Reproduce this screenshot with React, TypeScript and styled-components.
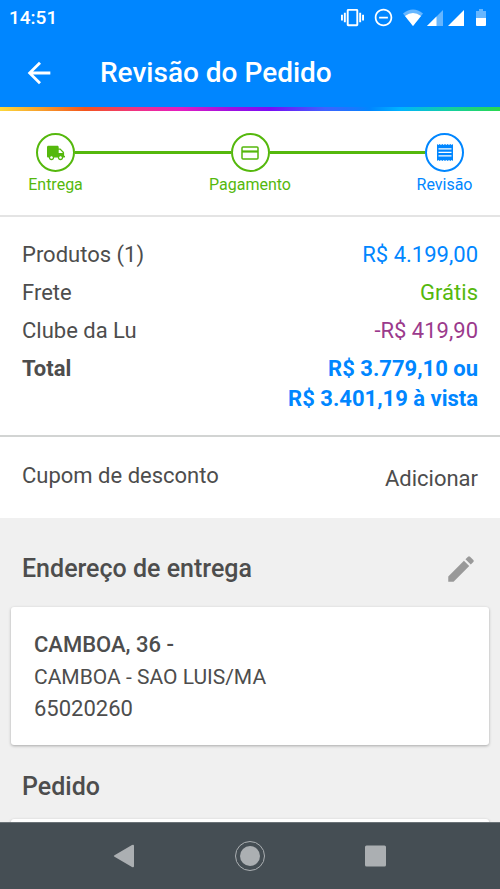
import React from 'react';
import styled, { createGlobalStyle } from 'styled-components';
import { MdArrowBack, MdEdit, MdVibration, MdRemoveCircleOutline } from 'react-icons/md';
import { FaTruck } from 'react-icons/fa';

const color = {
  blue: '#0086ff',
  green: '#55b80d',
  purple: '#9b3a8c',
  text: '#4d4d4d',
  page: '#f0f0f0',
  nav: '#454e54',
};

const GlobalStyle = createGlobalStyle`
  * { box-sizing: border-box; }
  body {
    margin: 0;
    background: ${color.page};
    color: ${color.text};
    font-family: Roboto, "Liberation Sans", sans-serif;
    font-size: 22px;
    line-height: 30px;
  }
  h1, h2, p, dl, dd, ol { margin: 0; padding: 0; }
  button {
    padding: 0;
    border: 0;
    background: none;
    color: inherit;
    font: inherit;
    cursor: pointer;
  }
  svg { display: block; }
`;

const Screen = styled.div`
  display: flex;
  flex-direction: column;
  height: 100vh;
  overflow: hidden;
`;

const StatusBar = styled.div`
  display: flex;
  flex: none;
  align-items: center;
  justify-content: space-between;
  height: 35px;
  padding: 0 13px 0 9px;
  background: ${color.blue};
  color: #fff;
  font-size: 19px;
  font-weight: 500;
`;

const StatusIcons = styled.div`
  display: flex;
  align-items: center;
`;

const Toolbar = styled.header`
  display: flex;
  flex: none;
  align-items: center;
  gap: 44px;
  height: 72px;
  padding: 3px 22px 0;
  background: ${color.blue};
  color: #fff;
`;

const Title = styled.h1`
  font-size: 28px;
  font-weight: 500;
  line-height: 36px;
`;

const Rainbow = styled.div`
  flex: none;
  height: 4px;
  background: linear-gradient(
    90deg,
    #fcd83b 0%, #f7a02c 8%, #f4551c 17%, #f0308a 28%, #e51cc0 36%,
    #a010e0 46%, #7a0cf5 54%, #3f62ff 65%, #0086ff 74%, #00b4ff 80%, #14cfa0 90%, #2ad94e 100%
  );
`;

const Content = styled.main`
  flex: 1;
  min-height: 0;
  overflow: hidden;
`;

const Steps = styled.ol`
  display: flex;
  height: 106px;
  padding: 22px 36px 0;
  border-bottom: 2px solid #e4e4e4;
  background: #fff;
  list-style: none;
`;

const Step = styled.li<{ $color: string }>`
  display: flex;
  flex: none;
  flex-direction: column;
  align-items: center;
  gap: 3px;
  width: 39px;
  color: ${(p) => p.$color};
  font-size: 16px;
  line-height: 20px;
  white-space: nowrap;
`;

const StepCircle = styled.span`
  display: flex;
  align-items: center;
  justify-content: center;
  width: 39px;
  height: 39px;
  border: 2px solid currentColor;
  border-radius: 50%;
`;

const Connector = styled.li`
  flex: 1;
  height: 3px;
  margin-top: 18px;
  background: ${color.green};
`;

const Summary = styled.dl`
  display: flex;
  flex-direction: column;
  gap: 8px;
  padding: 23px 22px 21px;
  border-bottom: 2px solid #d2d4d3;
  background: #fff;
`;

const SummaryRow = styled.div<{ $color: string; $bold?: boolean }>`
  display: flex;
  justify-content: space-between;
  font-weight: ${(p) => (p.$bold ? 700 : 400)};

  dd {
    color: ${(p) => p.$color};
    text-align: right;
  }
`;

const Coupon = styled.section`
  display: flex;
  align-items: flex-start;
  justify-content: space-between;
  height: 81px;
  padding: 24px 22px 0;
  background: #fff;
`;

const AddButton = styled.button`
  && { padding-top: 3px; }
`;

const SectionHead = styled.div`
  display: flex;
  align-items: center;
  justify-content: space-between;
  padding: 33px 22px 20px;
`;

const EditButton = styled.button`
  color: #999;
`;

const SectionTitle = styled.h2`
  font-size: 25px;
  font-weight: 500;
  line-height: 36px;
`;

const Card = styled.section`
  min-height: 138px;
  margin: 0 11px;
  padding: 22px 23px 20px;
  border-radius: 3px;
  background: #fff;
  box-shadow: 0 1px 3px rgba(0, 0, 0, 0.3);
  line-height: 32px;
`;

const Street = styled.p`
  font-weight: 500;
`;

const City = styled.p`
  font-size: 21px;
`;

const OrderHead = styled.div`
  padding: 24px 22px 14px;
`;

const NavBar = styled.nav`
  display: flex;
  flex: none;
  align-items: center;
  justify-content: space-between;
  height: 67px;
  padding: 0 108px;
  border-top: 1px solid #6b7378;
  background: ${color.nav};
`;

const DndIcon = styled(MdRemoveCircleOutline)`
  margin: 0 9px;
`;

function SignalIcons() {
  return (
    <svg width="84" height="20" viewBox="0 0 84 20" fill="#fff" aria-hidden="true">
      <path d="M0 5.500Q10 -2.500 20 5.500L10 18Z" opacity=".4" />
      <path d="M2 8Q10 2 18 8L10 18Z" />
      <path d="M40 2V18H24Z" opacity=".4" />
      <path d="M33.500 8.500V18H24Z" />
      <path d="M61 2V18H45Z" />
      <path d="M76 1h4v2h3v7H73V3h3z" opacity=".4" />
      <path d="M73 10h10v7q0 1-1 1h-8q-1 0-1-1z" />
    </svg>
  );
}

function CardIcon() {
  return (
    <svg width="18" height="14" viewBox="0 0 18 14" fill="none" stroke="currentColor" aria-hidden="true">
      <rect x="1" y="1" width="16" height="12" rx="1" strokeWidth="1.500" />
      <path d="M1 5.500H17" strokeWidth="2.200" />
    </svg>
  );
}

function ReceiptIcon() {
  return (
    <svg width="16" height="17" viewBox="0 0 16 17" aria-hidden="true">
      <path
        d="M0 0L1.330 1L2.670 0L4 1L5.330 0L6.670 1L8 0L9.330 1L10.670 0L12 1L13.330 0L14.670 1L16 0V17L14.670 16L13.330 17L12 16L10.670 17L9.330 16L8 17L6.670 16L5.330 17L4 16L2.670 17L1.330 16L0 17Z"
        fill="currentColor"
      />
      <path d="M1.500 4.800H14.500M1.500 8.300H14.500M1.500 11.800H14.500" stroke="#fff" strokeWidth="1.300" />
    </svg>
  );
}

const rows = [
  { label: 'Produtos (1)', value: 'R$ 4.199,00', tone: color.blue },
  { label: 'Frete', value: 'Grátis', tone: color.green },
  { label: 'Clube da Lu', value: '-R$ 419,90', tone: color.purple },
];

export default function App() {
  return (
    <Screen>
      <GlobalStyle />
      <StatusBar>
        <span>14:51</span>
        <StatusIcons>
          <MdVibration size={23} />
          <DndIcon size={21} />
          <SignalIcons />
        </StatusIcons>
      </StatusBar>
      <Toolbar>
        <button type="button" aria-label="Voltar">
          <MdArrowBack size={34} />
        </button>
        <Title>Revisão do Pedido</Title>
      </Toolbar>
      <Rainbow />
      <Content>
        <Steps>
          <Step $color={color.green}>
            <StepCircle><FaTruck size={18} /></StepCircle>
            Entrega
          </Step>
          <Connector aria-hidden="true" />
          <Step $color={color.green}>
            <StepCircle><CardIcon /></StepCircle>
            Pagamento
          </Step>
          <Connector aria-hidden="true" />
          <Step $color={color.blue} aria-current="step">
            <StepCircle><ReceiptIcon /></StepCircle>
            Revisão
          </Step>
        </Steps>
        <Summary>
          {rows.map((row) => (
            <SummaryRow key={row.label} $color={row.tone}>
              <dt>{row.label}</dt>
              <dd>{row.value}</dd>
            </SummaryRow>
          ))}
          <SummaryRow $color={color.blue} $bold>
            <dt>Total</dt>
            <dd>R$ 3.779,10 ou<br />R$ 3.401,19 à vista</dd>
          </SummaryRow>
        </Summary>
        <Coupon>
          <p>Cupom de desconto</p>
          <AddButton type="button">Adicionar</AddButton>
        </Coupon>
        <SectionHead>
          <SectionTitle>Endereço de entrega</SectionTitle>
          <EditButton type="button" aria-label="Editar endereço">
            <MdEdit size={34} />
          </EditButton>
        </SectionHead>
        <Card>
          <Street>CAMBOA, 36 -</Street>
          <City>CAMBOA - SAO LUIS/MA</City>
          <p>65020260</p>
        </Card>
        <OrderHead>
          <SectionTitle>Pedido</SectionTitle>
        </OrderHead>
        <Card aria-label="Pedido" />
      </Content>
      <NavBar>
        <button type="button" aria-label="Voltar">
          <svg width="32" height="32" viewBox="0 0 32 32" fill="#abafb2">
            <path d="M6.500 15.200L24 5Q26 4 26 6V26Q26 28 24 27L6.500 16.800Q5 16 6.500 15.200Z" />
          </svg>
        </button>
        <button type="button" aria-label="Início">
          <svg width="32" height="32" viewBox="0 0 32 32" fill="#abafb2">
            <circle cx="16" cy="16" r="14.500" fill="none" stroke="#abafb2" />
            <circle cx="16" cy="16" r="10" />
          </svg>
        </button>
        <button type="button" aria-label="Aplicativos recentes">
          <svg width="32" height="32" viewBox="0 0 32 32" fill="#abafb2">
            <rect x="5" y="5.500" width="21" height="21" rx="1.500" />
          </svg>
        </button>
      </NavBar>
    </Screen>
  );
}
